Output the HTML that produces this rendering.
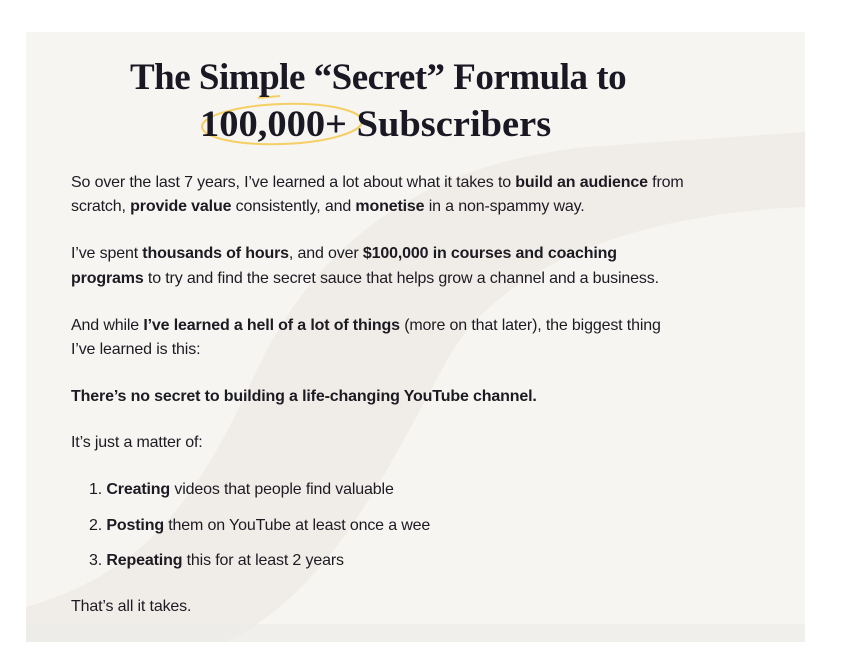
<!DOCTYPE html>
<html><head><meta charset="utf-8"><style>
html,body{margin:0;padding:0;background:#fff;width:847px;height:659px;overflow:hidden}
.panel{position:absolute;left:26px;top:32px;width:779px;height:610px;background:#f6f5f2;overflow:hidden}
.t{position:absolute;font-family:"Liberation Sans",sans-serif;font-size:16px;color:#1c1b22;letter-spacing:-0.15px;white-space:nowrap;line-height:18px}
b{font-weight:bold}
.h{position:absolute;font-family:"Liberation Serif",serif;font-weight:bold;font-size:37px;color:#1a1823;letter-spacing:-0.5px;white-space:nowrap;line-height:40px;transform-origin:left center}
</style></head><body>
<div class="panel">
<svg width="779" height="610" style="position:absolute;left:0;top:0">
<path d="M0 575 C120 540 170 470 230 340 C300 190 420 130 560 115 L779 100 L779 175 C640 180 480 220 420 330 C350 460 300 560 200 610 L0 610 Z" fill="#f0ede8"/>
<rect x="0" y="592" width="779" height="18" fill="#edebe7" opacity="0.6"/>
</svg>
</div>
<svg width="847" height="659" style="position:absolute;left:0;top:0">
<ellipse cx="282" cy="124" rx="80" ry="20" fill="none" stroke="#f5cf63" stroke-width="2" transform="rotate(-2 282 124)"/>
<path d="M258 98 L280 96" stroke="#f5cf63" stroke-width="2"/>
</svg>
<div class="h" style="left:130px;top:58px">The Simple “Secret” Formula to</div>
<div class="h" style="left:200px;top:105px;letter-spacing:0px;transform:scaleX(1.04)">100,000+ Subscribers</div>
<div class="t" style="left:71px;top:174px">So over the last 7 years, I’ve learned a lot about what it takes to <b>build an audience</b> from</div>
<div class="t" style="left:71px;top:198px">scratch, <b>provide value</b> consistently, and <b>monetise</b> in a non-spammy way.</div>
<div class="t" style="left:71px;top:245px">I’ve spent <b>thousands of hours</b>, and over <b>$100,000 in courses and coaching</b></div>
<div class="t" style="left:71px;top:270px"><b>programs</b> to try and find the secret sauce that helps grow a channel and a business.</div>
<div class="t" style="left:71px;top:317px">And while <b>I’ve learned a hell of a lot of things</b> (more on that later), the biggest thing</div>
<div class="t" style="left:71px;top:341px">I’ve learned is this:</div>
<div class="t" style="left:71px;top:388px"><b>There’s no secret to building a life-changing YouTube channel.</b></div>
<div class="t" style="left:71px;top:434px">It’s just a matter of:</div>
<div class="t" style="left:89px;top:481px">1. <b>Creating</b> videos that people find valuable</div>
<div class="t" style="left:89px;top:517px">2. <b>Posting</b> them on YouTube at least once a wee</div>
<div class="t" style="left:89px;top:552px">3. <b>Repeating</b> this for at least 2 years</div>
<div class="t" style="left:71px;top:598px">That’s all it takes.</div>
</body></html>
